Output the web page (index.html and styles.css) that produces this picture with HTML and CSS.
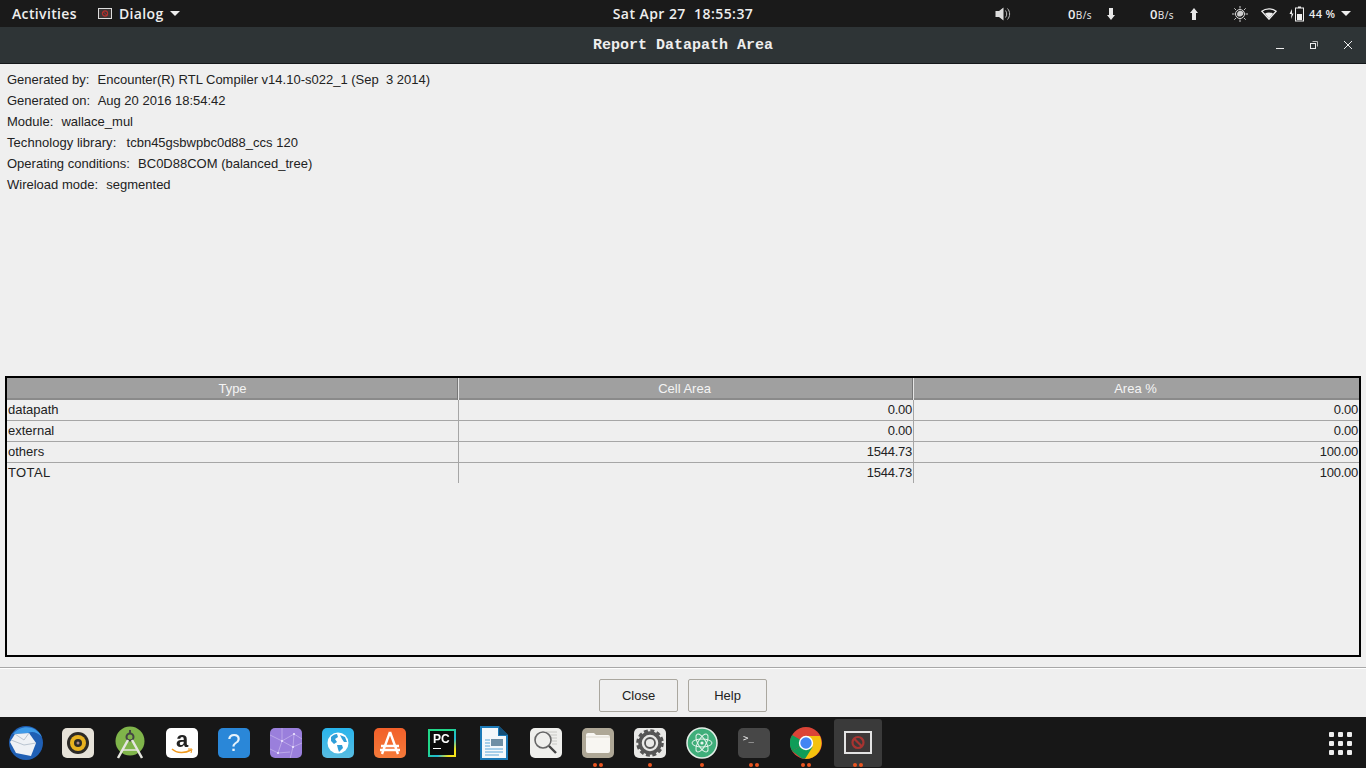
FILE: index.html
```html
<!DOCTYPE html>
<html lang="en">
<head>
  <meta charset="UTF-8" />
  <title>Report Datapath Area</title>
  <link rel="stylesheet" href="styles.css">
</head>
<body>

  <!-- Top bar -->
  <header class="topbar">
    <div class="top-left">
      <span class="activities">Activities</span>
      <span class="app-menu">
        <svg class="app-icon" width="14" height="11" viewBox="0 0 14 11"><rect x="0.5" y="0.5" width="13" height="10" fill="#3a3636" stroke="#ddd"/><circle cx="7" cy="5.5" r="2.6" fill="none" stroke="#b5302d" stroke-width="1.2"/><path d="M5 3.6l4 3.8" stroke="#b5302d"/></svg>
        <span>Dialog</span>
        <i class="caret"></i>
      </span>
    </div>
    <div class="clock">Sat Apr 27&nbsp;&nbsp;18:55:37</div>
    <div class="tray">
      <svg class="tray-sound" width="16" height="16" viewBox="0 0 16 16"><path d="M0.500 5h3.500L8.500 1.500v13L4 11H0.500z" fill="#ddd"/><path d="M10.500 4.500c1.600 2 1.600 5 0 7M12.500 2.500c2.800 3 2.800 8 0 11" fill="none" stroke="#bbb"/></svg>
      <span class="net net-down"><b>0</b>B/s</span>
      <svg class="arrow arrow-down" width="8" height="12" viewBox="0 0 8 12"><path d="M2 0h4v7h2l-4 5-4-5h2z" fill="#e8e8e8"/></svg>
      <span class="net net-up"><b>0</b>B/s</span>
      <svg class="arrow arrow-up" width="8" height="12" viewBox="0 0 8 12"><path d="M2 12h4V5h2L4 0 0 5h2z" fill="#e8e8e8"/></svg>
      <svg class="tray-bright" width="16" height="16" viewBox="0 0 16 16"><circle cx="8" cy="8" r="4.500" fill="none" stroke="#ddd"/><path d="M5 8a3.500 3.500 0 0 1 6.500-1.500A4 4 0 0 1 5.500 10z" fill="#ccc"/><path d="M8 0v2.500M8 13.500V16M0 8h2.500M13.500 8H16M2.300 2.300l1.800 1.800M11.900 11.900l1.800 1.800M2.300 13.700l1.800-1.800M11.900 4.100l1.800-1.800" stroke="#ccc"/></svg>
      <svg class="tray-wifi" width="16" height="12" viewBox="0 0 16 12"><path d="M0.800 3.200C4.800 0 11.200 0 15.200 3.200L8 11.200z" fill="none" stroke="#eee" stroke-width="1.300"/><path d="M4 5.500c2.400-1.400 5.600-1.400 8 0L8 10.500z" fill="#eee"/></svg>
      <svg class="tray-batt" width="16" height="16" viewBox="0 0 16 16"><path d="M3 3L0.500 8H2.500L2 13 4.500 7.500H3z" fill="#eee"/><rect x="6.500" y="2" width="8" height="13" fill="none" stroke="#eee"/><rect x="9" y="0.500" width="3" height="1.500" fill="#eee"/><rect x="8" y="8" width="5" height="6" fill="#eee"/></svg>
      <span class="batt-text">44 %</span>
      <i class="caret"></i>
    </div>
  </header>

  <!-- Window title -->
  <div class="titlebar">
    <div class="title">Report Datapath Area</div>
    <div class="win-btns">
      <svg width="10" height="10" viewBox="0 0 10 10"><path d="M1 8.500h8" stroke="#eee"/></svg>
      <svg width="10" height="10" viewBox="0 0 10 10"><path d="M3.500 1.500h5v5" fill="none" stroke="#bbb"/><rect x="1.500" y="3.500" width="5" height="5" fill="none" stroke="#eee"/></svg>
      <svg width="10" height="10" viewBox="0 0 10 10"><path d="M1 1l8 8M9 1l-8 8" stroke="#eee"/></svg>
    </div>
  </div>

  <!-- Dialog body -->
  <main class="dialog">
    <div class="info">
      <p><span class="label">Generated by:</span>&nbsp; Encounter(R) RTL Compiler v14.10-s022_1 (Sep&nbsp; 3 2014)</p>
      <p><span class="label">Generated on:</span>&nbsp; Aug 20 2016 18:54:42</p>
      <p><span class="label">Module:</span>&nbsp; wallace_mul</p>
      <p><span class="label label-wide">Technology library:</span>&nbsp; tcbn45gsbwpbc0d88_ccs 120</p>
      <p><span class="label">Operating conditions:</span>&nbsp; BC0D88COM (balanced_tree)</p>
      <p><span class="label">Wireload mode:</span>&nbsp; segmented</p>
    </div>

    <div class="report-box">
      <div class="report-row report-head">
        <div>Type</div><div>Cell Area</div><div>Area %</div>
      </div>
      <div class="report-row"><div>datapath</div><div>0.00</div><div>0.00</div></div>
      <div class="report-row"><div>external</div><div>0.00</div><div>0.00</div></div>
      <div class="report-row"><div>others</div><div>1544.73</div><div>100.00</div></div>
      <div class="report-row"><div class="total">TOTAL</div><div>1544.73</div><div>100.00</div></div>
    </div>

    <div class="actions">
      <button>Close</button>
      <button>Help</button>
    </div>
  </main>

  <!-- Dock -->
  <footer class="dock">
    <div class="slot"><svg width="36" height="36" viewBox="0 0 36 36"><circle cx="18" cy="18" r="17" fill="#1f5fb4"/><path d="M5 9C12 0 27 -1 34 12 29 7 24 6 20 8z" fill="#3f9be8"/><path d="M2 17l5-8 14-1 7 10-5 13-15-3z" fill="#eef1f5"/><path d="M3 15l13 5 12-2M7 9l9 6 5-7" fill="none" stroke="#b9c4d0"/></svg></div>
    <div class="slot"><div class="tile tile-sound"><svg width="32" height="32" viewBox="0 0 32 32"><circle cx="16" cy="16" r="11" fill="#2c2a26"/><circle cx="16" cy="16" r="8" fill="#e8b21f"/><circle cx="16" cy="16" r="4" fill="#2c2a26"/><circle cx="16" cy="16" r="1.500" fill="#a88"/></svg></div></div>
    <div class="slot"><svg width="32" height="34" viewBox="0 0 32 34"><circle cx="16" cy="15" r="14.500" fill="#7fb44a"/><circle cx="16" cy="11" r="3.500" fill="none" stroke="#444" stroke-width="2"/><path d="M16 4v4" stroke="#444" stroke-width="2"/><path d="M14 14L4 32M18 14l10 18" stroke="#e6e6e0" stroke-width="2.500"/><path d="M8 24h16" stroke="#e6e6e0" stroke-width="1.500"/></svg></div>
    <div class="slot"><div class="tile tile-amazon"><span class="amazon-a">a</span><svg class="smile" width="22" height="7" viewBox="0 0 22 7"><path d="M1 1c5 4.500 13 4.500 19 1" fill="none" stroke="#f09a1f" stroke-width="1.500"/><path d="M17 1l4 0-1 4" fill="none" stroke="#f09a1f"/></svg></div></div>
    <div class="slot"><div class="tile tile-help">?</div></div>
    <div class="slot"><div class="tile tile-purple"><svg width="32" height="32" viewBox="0 0 32 32"><path d="M0 8l12 6 12-7 8 5M12 14l-4 12M12 14l11 6 9-4M23 20l-3 12M24 7l-1 13M8 26L0 22M8 26l12-1M12 0v14" fill="none" stroke="#c9b8ee" stroke-width="0.700"/><g fill="#eee6ff"><circle cx="12" cy="14" r="1.100"/><circle cx="24" cy="7" r="1.100"/><circle cx="23" cy="20" r="1.100"/><circle cx="8" cy="26" r="1.100"/></g></svg></div></div>
    <div class="slot"><div class="tile tile-globe"><svg width="24" height="24" viewBox="0 0 24 24"><circle cx="12" cy="12" r="10.500" fill="#fff"/><path d="M5 6c2-2 4-3 6-3l1 3-3 2 2 3-3 2-3-3zM14 4l5 2 2 5-3 0-2-3zM11 14l5 0 1 3-4 4-1-3z" fill="#2f9ed8"/></svg></div></div>
    <div class="slot"><div class="tile tile-store"><svg width="28" height="28" viewBox="0 0 28 28"><path d="M14 3L6 25M14 3l8 22M5 17h18M4 21h20" fill="none" stroke="#fff" stroke-width="2.400"/></svg></div></div>
    <div class="slot"><div class="tile-pc"><div class="pc-inner"><span>PC</span><i></i></div></div></div>
    <div class="slot"><svg width="28" height="34" viewBox="0 0 28 34"><path d="M0 0h19l9 9v25H0z" fill="#1c7ab8"/><path d="M2 2h16v8h8v22H2z" fill="#f4f8fb"/><path d="M19 0l9 9h-9z" fill="#134f78"/><rect x="11" y="13" width="12" height="7" fill="#6f8fa5"/><path d="M5 14h5M5 17h5M5 20h5M5 23h18M5 26h18M5 29h14" stroke="#5aa6d8"/></svg></div>
    <div class="slot"><div class="tile tile-search"><svg width="32" height="32" viewBox="0 0 32 32"><path d="M16 5h11M20 8h7M22 11h5M22 14h5M22 17h5" stroke="#c8c8c4"/><circle cx="13" cy="13" r="8" fill="#efefec" stroke="#666" stroke-width="1.600"/><path d="M19 19l7 7" stroke="#444" stroke-width="2.400"/></svg></div></div>
    <div class="slot"><div class="tile tile-files"><svg width="26" height="22" viewBox="0 0 26 22"><path d="M1 3a2 2 0 0 1 2-2h6l2 2h12a2 2 0 0 1 2 2v14a2 2 0 0 1-2 2H3a2 2 0 0 1-2-2z" fill="#f8f6f2"/><path d="M1 5h24" stroke="#ddd9d0"/></svg></div><span class="dots"><i></i><i></i></span></div>
    <div class="slot"><div class="tile tile-gear"><svg width="30" height="30" viewBox="0 0 30 30"><circle cx="15" cy="15" r="10" fill="none" stroke="#555" stroke-width="3.500"/><circle cx="15" cy="15" r="12.500" fill="none" stroke="#555" stroke-width="2.600" stroke-dasharray="4 2.540"/><circle cx="15" cy="15" r="5" fill="none" stroke="#555" stroke-width="1.800"/></svg></div><span class="dots"><i></i></span></div>
    <div class="slot"><svg width="32" height="32" viewBox="0 0 32 32"><circle cx="16" cy="16" r="15" fill="#3fae7a" stroke="#e4efe8" stroke-width="1.500"/><g fill="none" stroke="#e8f5ee" stroke-width="1"><ellipse cx="16" cy="16" rx="10" ry="4"/><ellipse cx="16" cy="16" rx="10" ry="4" transform="rotate(60 16 16)"/><ellipse cx="16" cy="16" rx="10" ry="4" transform="rotate(120 16 16)"/></g><circle cx="16" cy="16" r="1.600" fill="#e8f5ee"/></svg><span class="dots"><i></i></span></div>
    <div class="slot"><div class="tile tile-term"><span>&gt;_</span></div><span class="dots"><i></i><i></i></span></div>
    <div class="slot"><svg width="32" height="32" viewBox="0 0 32 32"><circle cx="16" cy="16" r="16" fill="#db4437"/><path d="M16 16L2.100 24A16 16 0 0 1 2.100 8z" fill="#0f9d58"/><path d="M2.100 24L16 16l13.900 0A16 16 0 0 1 12 31.500z" fill="#0f9d58"/><path d="M16 9h13.900A16 16 0 0 1 15 32l7.500-12z" fill="#f4c20d"/><circle cx="16" cy="16" r="7.200" fill="#fff"/><circle cx="16" cy="16" r="5.700" fill="#4285f4"/></svg><span class="dots"><i></i><i></i></span></div>
    <div class="slot slot-active"><svg width="28" height="23" viewBox="0 0 28 23"><rect x="1" y="1" width="26" height="21" fill="#3d3838" stroke="#e4e4e4" stroke-width="2"/><circle cx="14" cy="11.500" r="5.500" fill="none" stroke="#a83431" stroke-width="2.200"/><path d="M10.200 7.700l7.600 7.600" stroke="#a83431" stroke-width="2.200"/></svg><span class="dots"><i></i><i></i></span></div>
    <div class="show-apps">
      <i></i><i></i><i></i><i></i><i></i><i></i><i></i><i></i><i></i>
    </div>
  </footer>

</body>
</html>
```

FILE: styles.css
```css
html, body {
  height: 100%;
}

body {
  margin: 0;
  height: 768px;
  overflow: hidden;
  display: flex;
  flex-direction: column;
  font-family: 'Liberation Sans', sans-serif;
  font-size: 13px;
  background: #efefef;
  color: #222;
}

/* top bar */
.topbar {
  height: 27px;
  background: #1a1a1a;
  color: #eee;
  display: grid;
  grid-template-columns: 1fr auto 1fr;
  align-items: center;
  font-family: 'Open Sans', 'Noto Sans', sans-serif;
  font-size: 14px;
  font-weight: 600;
  letter-spacing: 0.35px;
}

.top-left {
  display: flex;
  align-items: center;
  padding-left: 12px;
}

.activities {
  width: 86px;
}

.app-menu {
  display: flex;
  align-items: center;
  gap: 6px;
}

.app-icon {
  margin-right: 1px;
}

.caret {
  display: block;
  width: 0;
  height: 0;
  border-left: 5px solid transparent;
  border-right: 5px solid transparent;
  border-top: 5px solid #eee;
}

.clock {
  letter-spacing: 0.45px;
}

.tray {
  display: flex;
  align-items: center;
  justify-content: flex-end;
  height: 27px;
  padding-right: 15px;
}

.tray-sound { margin-right: 57px; }

.net {
  font-size: 10px;
  font-weight: 400;
  letter-spacing: 0.4px;
  width: 25px;
}

.net b {
  font-size: 13px;
  font-weight: 600;
}

.net-down { margin-right: 14px; }
.net-up { margin-right: 15px; }
.arrow-down { margin-right: 35px; }
.arrow-up { margin-right: 34px; }
.tray-bright { margin-right: 13px; }
.tray-wifi { margin-right: 12px; }
.tray-batt { margin-right: 4px; }

.batt-text {
  font-size: 11px;
  width: 27px;
  margin-right: 5px;
}

/* window title */
.titlebar {
  height: 36px;
  background: #2e3436;
  border-bottom: 1px solid #14181a;
  display: flex;
  align-items: center;
  justify-content: center;
  position: relative;
  color: #eee;
}

.title {
  font-family: 'Liberation Mono', monospace;
  font-size: 15px;
  font-weight: 700;
}

.win-btns {
  position: absolute;
  right: 13px;
  top: 13px;
  display: flex;
  gap: 24px;
}

.win-btns svg {
  display: block;
}

/* dialog */
.dialog {
  flex: 1;
  display: flex;
  flex-direction: column;
  min-height: 0;
}

.info {
  height: 312px;
  padding: 5px 7px 0;
  box-sizing: border-box;
}

.info p {
  margin: 0;
  height: 21px;
  line-height: 21px;
}

.label {
  margin-right: 1px;
}

.label-wide {
  margin-right: 3px;
  letter-spacing: 0.05px;
}

.report-box {
  margin: 0 5px;
  height: 281px;
  box-sizing: border-box;
  border: 2px solid #000;
}

.report-row {
  display: grid;
  grid-template-columns: 452px 455px 1fr;
  height: 21px;
  line-height: 20px;
  box-sizing: border-box;
  border-bottom: 1px solid #a6a6a6;
}

.report-row:last-child {
  height: 20px;
  border-bottom: none;
}

.report-row > div {
  padding: 0 1px;
  text-align: right;
  letter-spacing: -0.25px;
  box-sizing: border-box;
  border-right: 1px solid #a6a6a6;
}

.report-row > div:first-child {
  text-align: left;
  letter-spacing: 0;
}

.report-row > div.total {
  letter-spacing: 0.4px;
}

.report-row > div:last-child {
  border-right: none;
}

.report-head {
  height: 22px;
  line-height: 22px;
  background: #a0a0a0;
  color: #f4f4f4;
  border-bottom: 2px solid #8a8a8a;
}

.report-row.report-head > div {
  text-align: center;
  letter-spacing: 0;
  padding: 0 3px 0 0;
  border-right: 1px solid #e6e6e6;
  box-shadow: inset -1px 0 0 #777;
}

.report-row.report-head > div:first-child {
  padding: 0 1px;
}

.report-row.report-head > div:last-child {
  border-right: none;
  box-shadow: none;
  padding: 0 2px 0 0;
}

.actions {
  margin-top: 10px;
  border-top: 1px solid #a8a8a8;
  box-shadow: inset 0 1px 0 #fff;
  flex: 1;
  display: flex;
  justify-content: center;
  gap: 10px;
  padding-top: 11px;
}

.actions button {
  width: 79px;
  height: 33px;
  padding: 0;
  background: #efefef;
  border: 1px solid #aaa79f;
  border-radius: 2px;
  font-family: inherit;
  font-size: 13px;
  color: #222;
}

/* dock */
.dock {
  height: 51px;
  background: #171717;
  display: flex;
  align-items: center;
  position: relative;
}

.slot {
  width: 52px;
  height: 51px;
  display: flex;
  align-items: center;
  justify-content: center;
  position: relative;
  flex: none;
}

.slot > svg,
.slot > .tile,
.slot > .tile-pc {
  filter: blur(0.35px);
}

.slot-active {
  width: 48px;
  height: 48px;
  margin: 0 2px;
  background: #3a3a3a;
  border-radius: 3px;
}

.tile {
  width: 32px;
  height: 30px;
  border-radius: 5px;
  display: flex;
  align-items: center;
  justify-content: center;
  overflow: hidden;
}

.tile-sound { background: #e6e2d8; }

.tile-amazon {
  background: #fff;
  flex-direction: column;
  color: #222;
}

.amazon-a {
  font-family: 'Liberation Sans', sans-serif;
  font-weight: 700;
  font-size: 22px;
  line-height: 17px;
}

.smile {
  display: block;
}

.tile-help {
  background: #2a87d8;
  color: #e8f3fb;
  font-size: 24px;
}

.tile-purple { background: #9a7fdc; }
.tile-globe { background: linear-gradient(#28b4ec, #58bce0); }
.tile-store { background: linear-gradient(#f2602a, #f47a3a); }
.tile-search { background: #efefec; }
.tile-files { background: #aea796; }
.tile-gear { background: #e8e8e6; }

.tile-term {
  background: #474747;
  color: #eee;
  align-items: flex-start;
  justify-content: flex-start;
}

.tile-term span {
  font-family: 'DejaVu Sans Mono', monospace;
  font-size: 9px;
  line-height: 12px;
  padding: 4px 0 0 5px;
}

.tile-pc {
  width: 28px;
  height: 28px;
  box-sizing: border-box;
  padding: 2px;
  background: linear-gradient(135deg, #21d789 40%, #20b8d8 65%, #f5e31a 85%);
}

.pc-inner {
  width: 100%;
  height: 100%;
  background: #0c0c0c;
  color: #fff;
  font-size: 12px;
  font-weight: 700;
  line-height: 12px;
  padding: 2px 0 0 3px;
  box-sizing: border-box;
}

.pc-inner span {
  display: block;
}

.pc-inner i {
  display: block;
  width: 8px;
  height: 1px;
  background: #fff;
  margin-top: 3px;
}

.dots {
  position: absolute;
  bottom: 1px;
  left: 0;
  right: 0;
  display: flex;
  justify-content: center;
  gap: 2px;
}

.slot-active .dots {
  bottom: 0;
}

.dots i {
  display: block;
  width: 4px;
  height: 4px;
  border-radius: 50%;
  background: #e95420;
}

.show-apps {
  position: absolute;
  left: 1329px;
  top: 15px;
  display: grid;
  grid-template-columns: repeat(3, 5px);
  gap: 4px;
}

.show-apps i {
  width: 5px;
  height: 5px;
  background: #eee;
  border-radius: 1px;
}
```
